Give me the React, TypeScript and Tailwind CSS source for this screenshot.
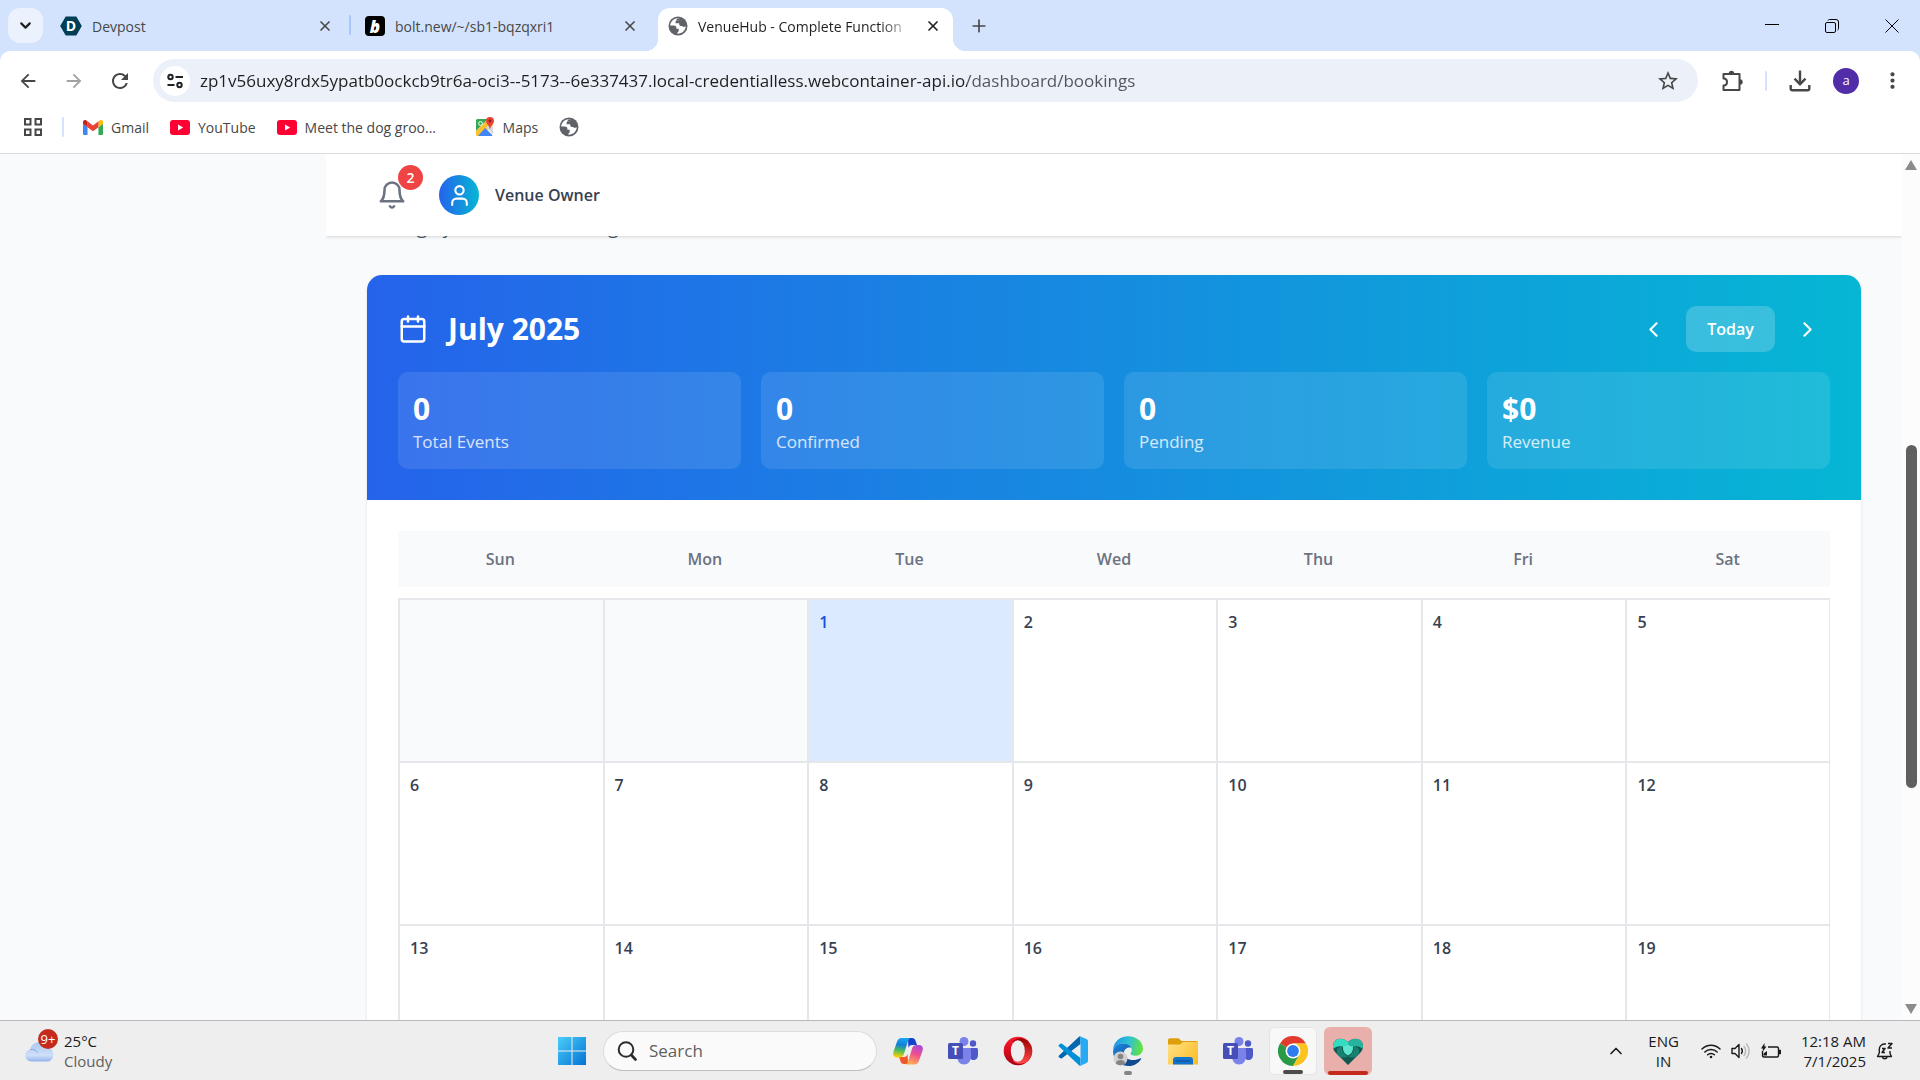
import type { ReactNode } from "react";
import { Calendar, ChevronDown, ChevronLeft, ChevronRight, ChevronUp, Plus, X } from "lucide-react";
import { MdArrowBack, MdArrowForward, MdMoreVert, MdRefresh, MdStarOutline } from "react-icons/md";

const URL_TEXT =
  "zp1v56uxy8rdx5ypatb0ockcb9tr6a-oci3--5173--6e337437.local-credentialless.webcontainer-api.io/dashboard/bookings";

const DAYS = ["Sun", "Mon", "Tue", "Wed", "Thu", "Fri", "Sat"];

// July 2025 starts on a Tuesday
const WEEKS: (number | null)[][] = [
  [null, null, 1, 2, 3, 4, 5],
  [6, 7, 8, 9, 10, 11, 12],
  [13, 14, 15, 16, 17, 18, 19],
];

const STATS = [
  { label: "Total Events", value: "0" },
  { label: "Confirmed", value: "0" },
  { label: "Pending", value: "0" },
  { label: "Revenue", value: "$0" },
];

/* ---------- small icons ---------- */

const GlobeIcon = () => (
  <svg viewBox="0 0 20 20" className="size-5 shrink-0">
    <circle cx="10" cy="10" r="9.5" fill="#5f6368" />
    <path
      d="M8.6 2.2C5 3 2.4 6 2.2 9.6h3.6c1.600 0 2.600.9 2.600 2.200v.9h2.300v2.100c0 .9-.5 1.500-1.300 1.500v1.500c4.400.2 8.300-3.200 8.400-7.700h-4.300c-1.400 0-2.300-.9-2.300-2.200v-.6H7.600V5.800c0-.9.6-1.500 1.500-1.500h2V2.300c-.8-.2-1.700-.3-2.500-.1z"
      fill="#fff"
    />
    <path d="M8.700 4.600V2.300l2.400.3v1.700zM13.500 8.500h3.800l.4 2.200h-3z" fill="#5f6368" />
  </svg>
);

const DevpostIcon = () => (
  <span className="relative size-[22px] shrink-0">
    <svg viewBox="0 0 22 22" className="size-[22px]">
      <path d="M5.700 1.500h10.600L21.800 11l-5.500 9.500H5.700L.2 11z" fill="#003e54" />
    </svg>
    <span className="absolute inset-0 flex items-center justify-center text-[14px] leading-none font-bold text-white">D</span>
  </span>
);

const BoltIcon = () => (
  <span className="flex size-5 shrink-0 items-center justify-center rounded-[4px] bg-black text-[17px] leading-none font-extrabold text-white italic">
    b
  </span>
);

const GmailIcon = () => (
  <svg viewBox="52 42 88 66" className="h-[15px] w-5">
    <path fill="#4285f4" d="M58 108h14V74L52 59v43c0 3.320 2.690 6 6 6" />
    <path fill="#34a853" d="M120 108h14c3.320 0 6-2.690 6-6V59l-20 15" />
    <path fill="#fbbc04" d="M120 48v26l20-15v-8c0-7.420-8.470-11.650-14.400-7.200" />
    <path fill="#ea4335" d="M72 74V48l24 18 24-18v26L96 92" />
    <path fill="#c5221f" d="M52 51v8l20 15V48l-5.600-4.200c-5.940-4.450-14.400-.22-14.400 7.200" />
  </svg>
);

const YouTubeIcon = () => (
  <svg viewBox="0 0 20 15" className="h-[15px] w-5">
    <rect width="20" height="15" rx="3" fill="#ff0033" />
    <path d="M8 4.500v6l5.200-3z" fill="#fff" />
  </svg>
);

const MapsIcon = () => (
  <svg viewBox="0 0 20 20" className="size-5">
    <path d="M1 3.500A1.500 1.500 0 0 1 2.500 2H13L1 14z" fill="#34a853" />
    <path d="M1 14 13 2h2l3 6L6 19H2.500A1.500 1.500 0 0 1 1 17.500z" fill="#fbc02d" />
    <path d="M10 11l7.500 7.300c-.3.500-.7.700-1.200.7H3z" fill="#4285f4" />
    <path d="M18 9v8.500L11 10.500l4-3z" fill="#d5dbe1" />
    <circle cx="5.500" cy="6.500" r="1.900" fill="none" stroke="#fff" strokeWidth="1" />
    <path d="M15 0a4 4 0 0 0-4 4c0 3 3.200 4 4 8.500C15.800 8 19 7 19 4a4 4 0 0 0-4-4z" fill="#ea4335" />
    <circle cx="15" cy="4" r="1.400" fill="#8e1b14" />
  </svg>
);

const AppsIcon = () => (
  <svg viewBox="0 0 20 20" className="size-5" fill="none" stroke="#474747" strokeWidth="2">
    <rect x="2" y="2" width="5.500" height="5.500" />
    <rect x="12.500" y="2" width="5.500" height="5.500" />
    <rect x="2" y="12.500" width="5.500" height="5.500" />
    <rect x="12.500" y="12.500" width="5.500" height="5.500" />
  </svg>
);

const TuneIcon = () => (
  <svg viewBox="0 0 18 18" className="size-[18px]" fill="none" stroke="#202124" strokeWidth="2">
    <circle cx="4.500" cy="5" r="2.200" />
    <path d="M9.500 5H17M1.500 13H8.500" />
    <circle cx="13.500" cy="13" r="2.200" />
  </svg>
);

const ExtensionIcon = () => (
  <svg viewBox="0 0 24 24" className="size-6" fill="none" stroke="#474747" strokeWidth="2" strokeLinejoin="round">
    <path d="M3.500 5h16v16h-16v-4.500c2 0 3.500-1.500 3.500-3.500s-1.500-3.500-3.500-3.500z" />
    <path d="M8.800 4.500a2.700 2.700 0 0 1 5.400 0zM20 10.300a2.700 2.700 0 0 1 0 5.400z" fill="#474747" stroke="none" />
  </svg>
);

const DownloadIcon = () => (
  <svg viewBox="0 0 24 24" className="size-6" fill="none" stroke="#474747" strokeWidth="2.400">
    <path d="M12 1.500v13.500M6.500 9.700 12 15.200l5.500-5.500M2.700 16v3.500c0 1 .8 1.800 1.800 1.800h15c1 0 1.800-.8 1.800-1.800V16" />
  </svg>
);

const BellIcon = () => (
  <svg viewBox="0 0 24 24" className="size-[30px]" fill="none" stroke="currentColor" strokeWidth="2" strokeLinecap="round" strokeLinejoin="round">
    <path d="M6 8a6 6 0 0 1 12 0c0 7 3 9 3 9H3s3-2 3-9" />
    <path d="M10.300 21a1.940 1.940 0 0 0 3.400 0" />
  </svg>
);

const UserIcon = () => (
  <svg viewBox="0 0 24 24" className="size-[25px]" fill="none" stroke="currentColor" strokeWidth="2" strokeLinecap="round" strokeLinejoin="round">
    <path d="M19 21v-2a4 4 0 0 0-4-4H9a4 4 0 0 0-4 4v2" />
    <circle cx="12" cy="7" r="4" />
  </svg>
);

/* ---------- taskbar icons ---------- */

const WindowsIcon = () => (
  <svg viewBox="0 0 30 30" className="size-[30px]">
    <defs>
      <linearGradient id="win" x1="0" y1="0" x2="30" y2="30" gradientUnits="userSpaceOnUse">
        <stop stopColor="#4dd0fb" />
        <stop offset="1" stopColor="#0070d2" />
      </linearGradient>
    </defs>
    <path d="M1 1h13.500v13.500H1zM15.500 1H29v13.500H15.500zM1 15.500h13.500V29H1zM15.500 15.500H29V29H15.500z" fill="url(#win)" />
  </svg>
);

const CopilotIcon = () => (
  <svg viewBox="0 0 30 30" className="size-[30px]">
    <defs>
      <linearGradient id="cop1" x1="8" y1="2" x2="5" y2="21" gradientUnits="userSpaceOnUse">
        <stop stopColor="#1aa5f0" />
        <stop offset=".35" stopColor="#1280d8" />
        <stop offset=".65" stopColor="#4cbb5a" />
        <stop offset="1" stopColor="#ffd000" />
      </linearGradient>
      <linearGradient id="cop2" x1="26" y1="8" x2="18" y2="28" gradientUnits="userSpaceOnUse">
        <stop stopColor="#a348e0" />
        <stop offset=".5" stopColor="#ee4f90" />
        <stop offset="1" stopColor="#ffad50" />
      </linearGradient>
    </defs>
    <path d="M15 2h4c2 0 3 1 3.700 3.300L24 9h-5c-2 0-3 1-3.600 3z" fill="#1442cc" />
    <path d="M15 28h-4c-2 0-3-1-3.700-3.300L6 21h5c2 0 3-1 3.600-3z" fill="#f2562c" />
    <path d="M8.500 2h9.300c-1.800.3-2.500 2-3 3.700l-4 12.500C10 20.500 8.500 21.500 6.500 21.500H4C1 21.500-.5 19.500.4 16L4 5.700C4.900 3.200 6.300 2 8.500 2z" fill="url(#cop1)" />
    <path d="M21.500 28.500h-9.300c1.800-.3 2.500-2 3-3.700l4-12.500C20 10 21.500 9 23.500 9H26c3 0 4.500 2 3.600 5.500L26 24.800c-.9 2.500-2.300 3.700-4.500 3.700z" fill="url(#cop2)" />
  </svg>
);

const TeamsIcon = () => (
  <span className="relative size-[30px]">
    <svg viewBox="0 0 30 30" className="size-[30px]">
      <circle cx="25" cy="7.500" r="3.200" fill="#5059c9" />
      <path d="M21 12h7.500c.8 0 1.500.7 1.500 1.500V19c0 3-2 5-4.500 5S21 22 21 19z" fill="#5059c9" />
      <circle cx="16" cy="5.500" r="4.500" fill="#7b83eb" />
      <path d="M9 12h12.500c.8 0 1.500.7 1.500 1.500V20c0 5-3 8.500-7 8.500S9 25 9 20z" fill="#7b83eb" />
      <rect x="0" y="7" width="15" height="16" rx="1.500" fill="#464eb8" />
    </svg>
    <span className="absolute top-[7px] left-0 w-[15px] text-center text-[12px] leading-4 font-bold text-white">T</span>
  </span>
);

const OperaIcon = () => (
  <svg viewBox="0 0 30 30" className="size-[30px]">
    <defs>
      <linearGradient id="op1" x1="10" y1="1" x2="12" y2="29" gradientUnits="userSpaceOnUse">
        <stop stopColor="#ff1b2d" />
        <stop offset="1" stopColor="#a70014" />
      </linearGradient>
      <linearGradient id="op2" x1="20" y1="3" x2="20" y2="27" gradientUnits="userSpaceOnUse">
        <stop stopColor="#9c0000" />
        <stop offset="1" stopColor="#ff4b4b" />
      </linearGradient>
    </defs>
    <circle cx="15" cy="15" r="14.300" fill="url(#op1)" />
    <path d="M10 5c5-4.500 12-3 15.500.7a14.300 14.300 0 0 1 0 18.600C22 28 15 29.500 10 25z" fill="url(#op2)" />
    <ellipse cx="14.800" cy="15" rx="7" ry="10.800" fill="#eee" />
  </svg>
);

const VSCodeIcon = () => (
  <svg viewBox="0 0 30 30" className="size-[30px]">
    <path d="M1 19.500 21 .8c.4-.3.800-.4 1.500-.3V8L4 22.300c-.5.400-1 .4-1.500 0L1 21.200c-.6-.5-.6-1.200 0-1.700z" fill="#0067b0" />
    <path d="M1 10.500 21 29.200c.4.300.8.400 1.500.3V22L4 7.700c-.5-.4-1-.4-1.500 0L1 8.800c-.6.500-.6 1.200 0 1.700z" fill="#0090d8" />
    <path d="M22.500.4 28.500 3c1 .5 1.500 1.200 1.500 2.200v19.600c0 1-.5 1.700-1.500 2.200l-6 2.800c-.6.200-1.200 0-1.700-.5.900.4 1.700 0 1.700-1V1.700c0-1-.8-1.400-1.700-1 .5-.4 1.100-.5 1.700-.3z" fill="#29a9f2" />
  </svg>
);

const EdgeIcon = () => (
  <svg viewBox="0 0 30 30" className="size-[30px]">
    <defs>
      <linearGradient id="ed1" x1="2" y1="6" x2="29" y2="12" gradientUnits="userSpaceOnUse">
        <stop stopColor="#1a9be6" />
        <stop offset=".5" stopColor="#2fc2cf" />
        <stop offset="1" stopColor="#66e23e" />
      </linearGradient>
      <linearGradient id="ed2" x1="0" y1="10" x2="12" y2="28" gradientUnits="userSpaceOnUse">
        <stop stopColor="#1c84d8" />
        <stop offset="1" stopColor="#0b4fa6" />
      </linearGradient>
    </defs>
    <path d="M.2 13C1 5.500 7.200.3 15 .3c9 0 15 6 15 12.200 0 4.500-3.400 7.300-7.500 7.300-3.500 0-5-1.300-5-2.300 0-.8 1.300-1.200 1.300-3.500 0-3.500-3.500-6.500-8.300-6.500C5.500 7.500 1.500 10 .2 13z" fill="url(#ed1)" />
    <path d="M.2 14c.8-4 5-6.500 10.300-6.500 3.800 0 6.800 1.700 8 4.300-4-1.300-7.700 1.200-7.700 5.700 0 5 4 9.500 9.700 9.800-2 1.500-4 2.400-6 2.400C6 29.700-.8 22.500.2 14z" fill="url(#ed2)" />
    <path d="M10.800 17c0 4.500 4.500 7 9.200 7 3 0 5-.8 7.500-1.800.6-.2.900.3.600.8-2.600 4.300-7 7-12 7-4 0-8-5-8-8.500 0-2 1-3.500 2.700-4.500z" fill="#124a90" />
    <circle cx="7.500" cy="22.500" r="7" fill="#d0d0d0" />
    <circle cx="7.500" cy="20.500" r="2.800" fill="#858585" />
    <path d="M2.800 27.500c.3-2.500 2-3.500 4.700-3.500s4.400 1 4.700 3.500c-2.500 2.300-6.900 2.300-9.400 0z" fill="#858585" />
  </svg>
);

const FolderIcon = () => (
  <svg viewBox="0 0 30 30" className="size-[30px]">
    <defs>
      <linearGradient id="fo1" x1="0" y1="5" x2="30" y2="28" gradientUnits="userSpaceOnUse">
        <stop stopColor="#ffe28a" />
        <stop offset="1" stopColor="#fbbc22" />
      </linearGradient>
    </defs>
    <path d="M0 4.500C0 3.100.8 2.300 2 2.300h7.500c1 0 1.600.3 2.200 1L13.500 5H28c1.200 0 2 .8 2 2v6H0z" fill="#dd9f0c" />
    <path d="M0 8.500h11c1 0 1.500-.3 2.200-1L15 6h13.500c.9 0 1.500.6 1.500 1.500v21H0z" fill="url(#fo1)" />
    <path d="M5 28.500v-4.500C5 22.300 6 21 8 21h14c2 0 3 1.300 3 3v4.500z" fill="#1273cf" />
    <path d="M8.500 25h13" stroke="#0a4a8d" strokeWidth="1.200" strokeLinecap="round" />
  </svg>
);

const ChromeIcon = () => (
  <svg viewBox="0 0 30 30" className="size-[30px]">
    <path d="M15 15 2 7.500A15 15 0 0 1 28 7.500H15z" fill="#e33b2e" />
    <path d="M15 15 2 7.500A15 15 0 0 0 15 30l6.500-11.200z" fill="#2a9a47" />
    <path d="M15 7.500h13A15 15 0 0 1 15 30l6.500-11.200z" fill="#fcc31e" />
    <circle cx="15" cy="15" r="7.500" fill="#fff" />
    <circle cx="15" cy="15" r="5.900" fill="#2f7cee" />
  </svg>
);

const FamilySafetyIcon = () => (
  <svg viewBox="0 0 30 30" className="size-[30px]">
    <path d="M15 29 2.500 16.500C-.8 13-.8 8 2 5s8-3.500 13 1c5-4.500 10-4 13-1s2.800 8-.5 11.500z" fill="#12584f" />
    <path d="M15 6c5-4.500 10-4 13-1 2 2.300 2.500 5.300 1.500 8-2-2.500-5-3.300-8.500-2.500L15 13z" fill="#27b49e" />
    <path d="M15 6C10 1.500 5 2 2 5c-2 2.300-2.500 5.300-1.500 8 2-2.500 5-3.300 8.500-2.500l6 2.500z" fill="#35dcc2" />
    <path d="M5 19c-2.500-4-1-8.500 4-8.500-.2 5 2 8 6 10 4-2 6.200-5 6-10 5 0 6.500 4.500 4 8.500-2.500 3-7 3.300-10 1.500C12 22.300 7.500 22 5 19z" fill="#178272" />
    <path d="M15 19.500c-3.500-1.800-5.300-4-5-9 2 0 3.500-.5 5-2 1.500 1.500 3 2 5 2 .3 5-1.500 7.200-5 9z" fill="#5ce6cf" />
  </svg>
);

const CloudIcon = () => (
  <svg viewBox="0 0 30 22" className="h-[22px] w-[30px]">
    <defs>
      <linearGradient id="cl" x1="15" y1="0" x2="15" y2="22" gradientUnits="userSpaceOnUse">
        <stop stopColor="#a5c3f2" />
        <stop offset=".7" stopColor="#cfdff8" />
        <stop offset="1" stopColor="#8fb0ec" />
      </linearGradient>
    </defs>
    <path d="M6 21.500a6 6 0 0 1-.8-11.900A8.500 8.500 0 0 1 21 6.500 8 8 0 0 1 24 21.500z" fill="url(#cl)" />
    <path d="M5 9.600c3-.8 6 .4 7.500 3" fill="none" stroke="#86a9e8" strokeWidth="1" />
  </svg>
);

const WifiIcon = () => (
  <svg viewBox="0 0 20 16" className="h-4 w-5" fill="none" stroke="#1b1b1b" strokeWidth="1.500" strokeLinecap="round">
    <path d="M1 6a12.700 12.700 0 0 1 18 0M3.800 9a8.800 8.800 0 0 1 12.400 0M6.600 11.800a4.800 4.800 0 0 1 6.800 0" />
    <circle cx="10" cy="14" r="1.300" fill="#1b1b1b" stroke="none" />
  </svg>
);

const SpeakerIcon = () => (
  <svg viewBox="0 0 20 18" className="h-[18px] w-5" fill="none" stroke="#1b1b1b" strokeWidth="1.400" strokeLinecap="round" strokeLinejoin="round">
    <path d="M1 6.500h3L8 2.500v13L4 11.500H1zM10.500 6.500c1 1.500 1 3.500 0 5" />
    <path d="M13 4.500c2.200 2.500 2.200 6.500 0 9M15.500 2c3.500 4 3.500 10 0 14" stroke="#b5b5b5" />
  </svg>
);

const BatteryIcon = () => (
  <svg viewBox="0 0 20 16" className="h-4 w-5" fill="none" stroke="#1b1b1b" strokeWidth="1.400">
    <path d="M7 4h9c1 0 1.500.6 1.500 1.500v7c0 .9-.5 1.500-1.500 1.500H3c-1 0-1.500-.6-1.500-1.500V8" />
    <path d="M18 7.500h1.300v3H18z" fill="#1b1b1b" />
    <path d="M3.500 0 0 5.500h2L1.500 9l4-5.500h-2zM2.500 12.500v-2L6 8v4.500z" fill="#1b1b1b" stroke="none" />
  </svg>
);

const SnoozeBellIcon = () => (
  <svg viewBox="0 0 18 18" className="size-[18px]" fill="none" stroke="#1b1b1b" strokeWidth="1.400" strokeLinejoin="round">
    <path d="M10 2C6 1.500 3.300 4 3.300 7.500V11L1.500 14.500h14L14 11.500V9M6.500 15c.5 2.300 4 2.300 4.500 0" />
    <path d="M6 6.500h3L6 10.500h3M12 1.500h4L12 6h4" strokeWidth="1.500" />
  </svg>
);

/* ---------- browser ---------- */

type TabProps = { icon: ReactNode; title: string; active?: boolean };

const Tab = ({ icon, title, active }: TabProps) => (
  <div
    className={`relative flex h-[43px] w-[295px] items-center pb-[7px] pl-[10px] pr-[10px] ${
      active ? "rounded-t-[12px] bg-white text-[#1f1f1f]" : "text-[#474747]"
    }`}
  >
    {active && (
      <>
        <span className="absolute bottom-0 -left-3 size-3 bg-[radial-gradient(circle_at_0_0,transparent_12px,white_12px)]" />
        <span className="absolute bottom-0 -right-3 size-3 bg-[radial-gradient(circle_at_100%_0,transparent_12px,white_12px)]" />
      </>
    )}
    {icon}
    <span
      className={`ml-[10px] flex-1 overflow-hidden text-[14px] whitespace-nowrap ${
        active ? "mask-r-from-85% mask-r-to-100%" : ""
      }`}
    >
      {title}
    </span>
    <button aria-label={`Close ${title}`} className="ml-[10px] flex size-5 items-center justify-center">
      <X size={16} strokeWidth={2.5} />
    </button>
  </div>
);

const IconButton = ({ label, children }: { label: string; children: ReactNode }) => (
  <button aria-label={label} className="flex size-9 shrink-0 items-center justify-center text-[#474747]">
    {children}
  </button>
);

const TabStrip = () => (
  <div className="flex h-[51px] items-end bg-[#d3e3fd] pl-2">
    <button aria-label="Search tabs" className="mb-2 flex size-[35px] items-center justify-center rounded-[12px] bg-[#ebf1fd]">
      <ChevronDown size={17} strokeWidth={3} className="text-[#1f1f1f]" />
    </button>
    <div className="ml-[7px] flex">
      <Tab icon={<DevpostIcon />} title="Devpost" />
      <div className="mx-1 mt-[7px] h-5 w-[2px] rounded bg-[#a8c7fa]" />
      <Tab icon={<BoltIcon />} title="bolt.new/~/sb1-bqzqxri1" />
      <div className="w-2" />
      <Tab icon={<GlobeIcon />} title="VenueHub - Complete Function" active />
    </div>
    <button aria-label="New tab" className="mb-[15px] ml-4 flex size-5 items-center justify-center text-[#474747]">
      <Plus size={20} strokeWidth={2} />
    </button>
    <div className="mb-[15px] ml-auto flex gap-10 pr-[18px] text-[#1f1f1f]">
      <button aria-label="Minimize" className="flex size-5 items-center justify-center">
        <span className="mb-1 h-px w-[14px] bg-black" />
      </button>
      <button aria-label="Restore" className="flex size-5 items-center justify-center">
        <svg viewBox="0 0 14 14" className="size-[14px]" fill="none" stroke="#000" strokeWidth="1">
          <rect x=".5" y="3.500" width="10" height="10" rx="1.500" />
          <path d="M3 1.500C3.300.8 3.800.5 4.500.5H11A2.500 2.500 0 0 1 13.500 3v6.500c0 .7-.3 1.200-1 1.500" />
        </svg>
      </button>
      <button aria-label="Close window" className="flex size-5 items-center justify-center">
        <svg viewBox="0 0 14 14" className="size-[14px]" stroke="#000" strokeWidth="1">
          <path d="M.5.5l13 13M13.500.5l-13 13" />
        </svg>
      </button>
    </div>
  </div>
);

const Toolbar = () => (
  <div className="bg-[#d3e3fd]">
    <div className="flex items-center gap-[10px] rounded-t-[10px] bg-white px-[10px] py-2">
      <IconButton label="Back"><MdArrowBack size={22} /></IconButton>
      <span className="opacity-50"><IconButton label="Forward"><MdArrowForward size={22} /></IconButton></span>
      <IconButton label="Reload"><MdRefresh size={24} /></IconButton>
      <div className="mr-[6px] ml-[5px] flex h-[43px] flex-1 items-center rounded-full bg-[#ebf0f9] pr-3 pl-[7px]">
        <button aria-label="View site information" className="flex size-[30px] items-center justify-center rounded-full bg-white">
          <TuneIcon />
        </button>
        <input
          aria-label="Address"
          readOnly
          value={URL_TEXT}
          className="ml-[10px] h-8 flex-1 bg-linear-to-r from-[#1f1f1f] from-[767px] to-[#505357] to-[767px] bg-clip-text text-[17px] text-transparent outline-none"
        />
        <IconButton label="Bookmark this page"><MdStarOutline size={24} /></IconButton>
      </div>
      <IconButton label="Extensions"><ExtensionIcon /></IconButton>
      <div className="mx-[5px] h-5 w-[2px] rounded bg-[#d3e3fd]" />
      <IconButton label="Downloads"><DownloadIcon /></IconButton>
      <IconButton label="Profile">
        <span className="flex size-[26px] items-center justify-center rounded-full bg-[#512da8] text-[13px] leading-none text-white">a</span>
      </IconButton>
      <IconButton label="Menu"><MdMoreVert size={25} /></IconButton>
    </div>
  </div>
);

const Bookmark = ({ icon, label, className = "" }: { icon: ReactNode; label: string; className?: string }) => (
  <a href="#" className="flex items-center gap-2">
    {icon}
    <span className={className}>{label}</span>
  </a>
);

const BookmarksBar = () => (
  <nav className="border-b border-[#dcdcdc] bg-white pb-[9px]">
    <div className="flex h-[34px] items-center gap-[21px] pl-[23px] text-[14px] text-[#474747]">
      <button aria-label="Apps"><AppsIcon /></button>
      <div className="h-5 w-[2px] -mx-[2px] rounded bg-[#d3e3fd]" />
      <Bookmark icon={<GmailIcon />} label="Gmail" />
      <Bookmark icon={<YouTubeIcon />} label="YouTube" />
      <Bookmark icon={<YouTubeIcon />} label="Meet the dog groo..." className="w-[149px]" />
      <Bookmark icon={<MapsIcon />} label="Maps" />
      <a href="#" aria-label="Website"><GlobeIcon /></a>
    </div>
  </nav>
);

/* ---------- page ---------- */

const PageHeader = () => (
  <header className="relative z-10 flex h-[82px] shrink-0 items-center bg-white px-[41px] shadow-[0_1px_3px_rgba(0,0,0,0.15)]">
    <button aria-label="Notifications" className="relative p-[10px] text-[#6b7280]">
      <BellIcon />
      <span className="absolute -top-[5px] -right-[6px] flex size-[25px] items-center justify-center rounded-full bg-[#ef4444] text-[14px] leading-none font-semibold text-white">
        2
      </span>
    </button>
    <div className="ml-[22px] flex items-center gap-4">
      <span className="flex size-10 items-center justify-center rounded-full bg-linear-to-r/srgb from-[#2563eb] to-[#06b6d4] text-white">
        <UserIcon />
      </span>
      <span className="text-[16px] font-semibold text-[#374151]">Venue Owner</span>
    </div>
  </header>
);

const CalendarHeader = () => (
  <div className="bg-linear-to-r/srgb from-[#2563eb] to-[#06b6d4] p-[31px] text-white">
    <div className="mb-5 flex items-center justify-between">
      <div className="flex items-center gap-5">
        <Calendar size={30} />
        <h2 className="text-[30px] leading-10 font-bold">July 2025</h2>
      </div>
      <div className="flex items-center gap-[10px]">
        <button aria-label="Previous month" className="p-[10px]"><ChevronLeft size={25} /></button>
        <button className="h-[46px] w-[89px] rounded-[10px] bg-white/20 text-[16px] font-semibold">Today</button>
        <button aria-label="Next month" className="p-[10px]"><ChevronRight size={25} /></button>
      </div>
    </div>
    <div className="grid grid-cols-4 gap-5">
      {STATS.map((stat) => (
        <div key={stat.label} className="rounded-[10px] bg-white/10 p-[15px]">
          <div className="mt-[2px] text-[30px] leading-10 font-bold">{stat.value}</div>
          <div className="text-[17px] leading-[25px] text-white/80">{stat.label}</div>
        </div>
      ))}
    </div>
  </div>
);

const CalendarTable = () => (
  <table className="w-full table-fixed border-separate border-spacing-0">
    <thead>
      <tr>
        {DAYS.map((day) => (
          <th key={day} scope="col" className="h-[67px] border-b-[11px] border-white bg-[#f9fafb] text-[16px] leading-[25px] font-semibold text-[#6b7280]">
            {day}
          </th>
        ))}
      </tr>
    </thead>
    <tbody>
      {WEEKS.map((week, i) => (
        <tr key={i}>
          {week.map((day, j) => (
            <td
              key={j}
              className={`h-[163px] border-t-2 border-l-2 border-[#e5e7eb] p-[10px] align-top text-[16px] leading-[25px] font-semibold last:border-r ${
                day === 1 ? "bg-[#dbeafe] text-[#1d4ed8]" : day ? "bg-white text-[#374151]" : "bg-[#f9fafb]"
              }`}
            >
              {day}
            </td>
          ))}
        </tr>
      ))}
    </tbody>
  </table>
);

const ScrollBar = () => (
  <div className="flex w-[18px] shrink-0 flex-col items-center bg-[#fcfcfc] py-[6px]">
    <span className="h-[10px] w-3 bg-[#8b8b8b] [clip-path:polygon(50%_0,100%_100%,0_100%)]" />
    <div className="flex-[275]" />
    <div className="w-[11px] flex-[344] rounded-full bg-[#606060]" />
    <div className="flex-[216]" />
    <span className="h-[10px] w-3 bg-[#8b8b8b] [clip-path:polygon(0_0,100%_0,50%_100%)]" />
  </div>
);

/* ---------- taskbar ---------- */

const TaskButton = ({ label, children, className = "", bar = "" }: { label: string; children: ReactNode; className?: string; bar?: string }) => (
  <button aria-label={label} className={`relative flex size-12 items-center justify-center rounded-[6px] ${className}`}>
    {children}
    {bar && <span className={`absolute bottom-0 h-1 rounded-full ${bar}`} />}
  </button>
);

const Taskbar = () => (
  <footer className="relative z-20 grid h-[60px] shrink-0 grid-cols-[1fr_auto_1fr] items-center border-t border-[#b9b9bc] bg-[#eee] text-[15px] leading-5 text-[#1b1b1b]">
    <div className="flex items-center pl-[25px]">
      <div className="relative">
        <CloudIcon />
        <span className="absolute -top-[11px] -right-[3px] flex size-5 items-center justify-center rounded-full bg-[#c42b1c] text-[13px] text-white">
          9+
        </span>
      </div>
      <div className="ml-[9px]">
        <div>25°C</div>
        <div className="text-[#5f5f5f]">Cloudy</div>
      </div>
    </div>

    <div className="flex items-center gap-[7px]">
      <TaskButton label="Start"><WindowsIcon /></TaskButton>
      <label className="flex h-10 w-[274px] items-center rounded-full border border-[#dcdcdc] border-b-[#c0c0c0] bg-[#fafafa] pl-[13px]">
        <svg viewBox="0 0 20 20" className="size-5" fill="none" stroke="#2b2b2b" strokeWidth="2" strokeLinecap="round">
          <circle cx="9" cy="8.500" r="7.300" />
          <path d="M14.300 14l4.200 4.500" strokeWidth="2.600" />
        </svg>
        <input
          aria-label="Search"
          placeholder="Search"
          className="ml-3 w-[180px] bg-transparent text-[17px] outline-none placeholder:text-[#5f5f5f]"
        />
      </label>
      <TaskButton label="Copilot"><CopilotIcon /></TaskButton>
      <TaskButton label="Teams"><TeamsIcon /></TaskButton>
      <TaskButton label="Opera"><OperaIcon /></TaskButton>
      <TaskButton label="Visual Studio Code"><VSCodeIcon /></TaskButton>
      <TaskButton label="Edge" bar="w-2 bg-[#858585]"><EdgeIcon /></TaskButton>
      <TaskButton label="File Explorer"><FolderIcon /></TaskButton>
      <TaskButton label="Teams chat"><TeamsIcon /></TaskButton>
      <TaskButton label="Chrome" className="border border-[#e5e5e5] bg-[#f8f8f8]" bar="w-5 bg-[#4d4a48]"><ChromeIcon /></TaskButton>
      <TaskButton label="Family Safety" className="bg-[#e8afab]" bar="w-10 bg-[#c42b1c]"><FamilySafetyIcon /></TaskButton>
    </div>

    <div className="flex items-center justify-end pr-[26px]">
      <button aria-label="Show hidden icons"><ChevronUp size={20} strokeWidth={2} /></button>
      <button className="ml-[22px] text-center">ENG<br />IN</button>
      <button aria-label="Network, volume and battery" className="ml-[22px] flex items-center gap-[10px]">
        <WifiIcon />
        <SpeakerIcon />
        <BatteryIcon />
      </button>
      <div className="ml-5 text-right">
        <div>12:18 AM</div>
        <div>7/1/2025</div>
      </div>
      <button aria-label="Notifications" className="ml-[10px]"><SnoozeBellIcon /></button>
    </div>
  </footer>
);

export default function App() {
  return (
    <div className="flex h-screen flex-col overflow-hidden bg-[#f9fafb] font-['Open_Sans','Noto_Sans',sans-serif]">
      <TabStrip />
      <Toolbar />
      <BookmarksBar />

      <div className="flex min-h-0 flex-1">
        <aside className="w-[326px] shrink-0" />
        <div className="flex min-w-0 flex-1 flex-col overflow-hidden">
          <PageHeader />
          <main className="-mt-6 min-h-0 flex-1 px-[41px]">
            <p className="mb-[33px] text-[19px] leading-[30px] text-[#4b5563]">Manage your venue bookings</p>
            <section className="overflow-hidden rounded-[15px] bg-white shadow-sm">
              <CalendarHeader />
              <div className="p-[31px]">
                <CalendarTable />
              </div>
            </section>
          </main>
        </div>
        <ScrollBar />
      </div>

      <Taskbar />
    </div>
  );
}
